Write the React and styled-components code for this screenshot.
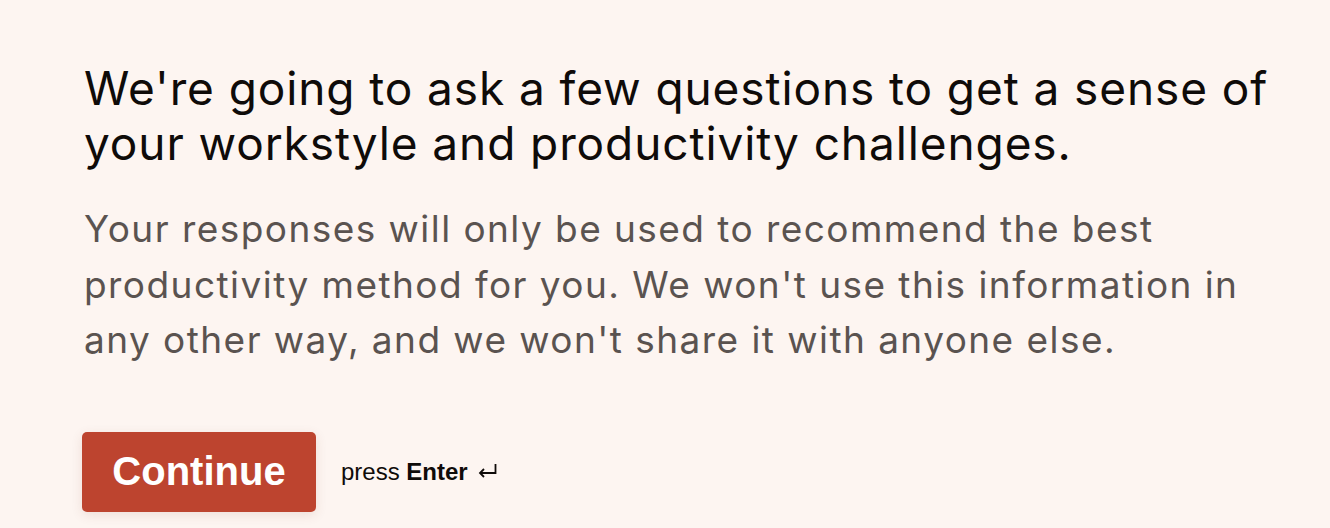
import React from "react";
import styled, { createGlobalStyle } from "styled-components";

const Global = createGlobalStyle`
  html, body { margin: 0; padding: 0; background: #fdf5f1; }
  body { font-family: Inter, "Liberation Sans", sans-serif; }
`;

const Page = styled.main`
  min-height: 528px;
  box-sizing: border-box;
  padding: 61px 40px 0 84px;
  background: #fdf5f1;
`;

const Heading = styled.h1`
  margin: 0;
  font-family: Inter, sans-serif;
  font-weight: 400;
  font-size: 46px;
  letter-spacing: 0.9px;
  line-height: 55px;
  color: #0f0b09;
  max-width: 1200px;
`;

const Lead = styled.p`
  margin: 30px 0 0;
  font-family: Inter, sans-serif;
  font-size: 37px;
  letter-spacing: 1.45px;
  line-height: 55.5px;
  color: #5a5350;
  max-width: 1160px;
`;

const Actions = styled.div`
  display: flex;
  align-items: center;
  gap: 25px;
  margin-top: 64px;
  margin-left: -2px;
`;

const Button = styled.button`
  width: 234px;
  height: 80px;
  border: none;
  border-radius: 5px;
  background: #bd442f;
  color: #fff;
  font-family: "Liberation Sans", Arial, sans-serif;
  font-weight: 700;
  font-size: 40px;
  box-shadow: 0 3px 12px rgba(120, 60, 40, 0.12);
  cursor: pointer;
`;

const Hint = styled.span`
  font-family: "Liberation Sans", Arial, sans-serif;
  font-size: 24px;
  color: #0f0b09;
  display: flex;
  align-items: center;
  gap: 9px;
  b { font-weight: 700; }
`;

const EnterIcon = () => (
  <svg width="20" height="16" viewBox="0 0 20 16" fill="none" stroke="#0f0b09" strokeWidth="1.8" style={{ marginTop: -3 }}>
    <path d="M18.5 2v9H3" />
    <path d="M7 7l-4 4 4 4" />
  </svg>
);

export default function App() {
  return (
    <>
      <Global />
      <Page>
        <Heading>
          We're going to ask a few questions to get a sense of your workstyle and productivity challenges.
        </Heading>
        <Lead>
          Your responses will only be used to recommend the best productivity method for you. We won't use this information in any other way, and we won't share it with anyone else.
        </Lead>
        <Actions>
          <Button>Continue</Button>
          <Hint>
            <span>press <b>Enter</b></span>
            <EnterIcon />
          </Hint>
        </Actions>
      </Page>
    </>
  );
}
